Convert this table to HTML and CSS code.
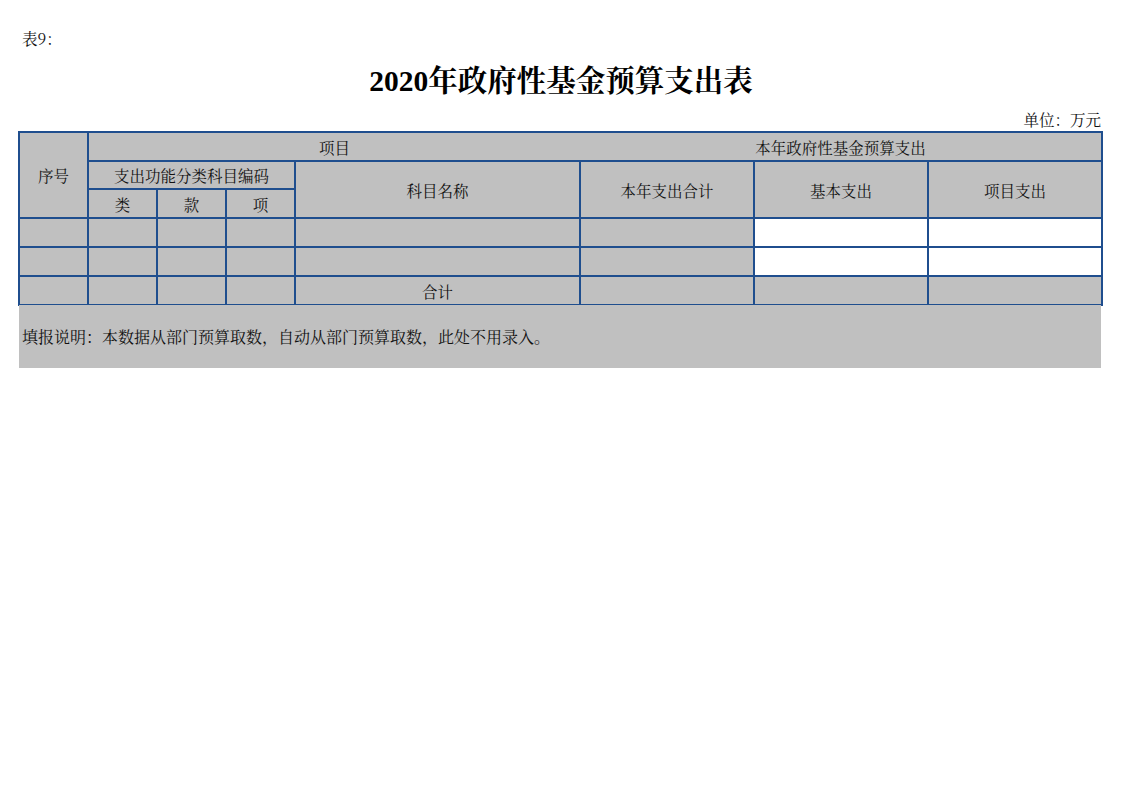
FILE: index.html
```html
<!DOCTYPE html>
<html lang="zh-CN">
<head>
<meta charset="utf-8">
<title>2020年政府性基金预算支出表</title>
<link rel="stylesheet" href="styles.css">
</head>
<body>
<div class="page">
  <div class="table-no">表9<span class="fw">：</span></div>
  <h1 class="title">2020年政府性基金预算支出表</h1>
  <div class="unit">单位<span class="fw">：</span>万元</div>
  <table class="budget">
    <colgroup>
      <col class="c-narrow"><col class="c-narrow"><col class="c-narrow"><col class="c-narrow">
      <col class="c-name"><col class="c-mid"><col class="c-mid"><col class="c-mid">
    </colgroup>
    <tr class="r-head">
      <td rowspan="3">序号</td>
      <td colspan="4" class="no-right">项目</td>
      <td colspan="3" class="no-left">本年政府性基金预算支出</td>
    </tr>
    <tr class="r-head2">
      <td colspan="3">支出功能分类科目编码</td>
      <td rowspan="2">科目名称</td>
      <td rowspan="2">本年支出合计</td>
      <td rowspan="2">基本支出</td>
      <td rowspan="2">项目支出</td>
    </tr>
    <tr class="r-head3">
      <td>类</td><td>款</td><td>项</td>
    </tr>
    <tr class="r-data">
      <td></td><td></td><td></td><td></td><td></td><td></td><td class="blank"></td><td class="blank"></td>
    </tr>
    <tr class="r-data">
      <td></td><td></td><td></td><td></td><td></td><td></td><td class="blank"></td><td class="blank"></td>
    </tr>
    <tr class="r-data">
      <td></td><td></td><td></td><td></td><td>合计</td><td></td><td></td><td></td>
    </tr>
  </table>
  <div class="note">填报说明<span class="fw">：</span>本数据从部门预算取数<span class="fw">，</span>自动从部门预算取数<span class="fw">，</span>此处不用录入。</div>
</div>
</body>
</html>
```
FILE: styles.css
```css
html, body {
  margin: 0;
  padding: 0;
  background: #ffffff;
}

body {
  font-family: "Noto Serif CJK SC", "Liberation Serif", "Noto Sans CJK SC", serif;
  color: #111111;
  font-size: 15.5px;
}

.fw {
  display: inline-block;
  width: 1em;
  text-align: left;
}

.page {
  width: 1084px;
  padding: 28px 0 0 19px;
}

.table-no {
  padding-left: 3px;
  height: 20px;
  line-height: 20px;
}

.title {
  margin: 0;
  padding-top: 13px;
  height: 40px;
  line-height: 40px;
  text-align: center;
  font-family: "Liberation Serif", "Noto Serif CJK SC", "Noto Sans CJK SC", serif;
  font-size: 29.5px;
  font-weight: bold;
  color: #000000;
}

.unit {
  text-align: right;
  padding-right: 2px;
  height: 22px;
  line-height: 22px;
  margin-top: 7px;
}

.budget {
  border-collapse: collapse;
  table-layout: fixed;
  width: 1084px;
  margin-left: -1px;
  margin-top: 1px;
}

.c-narrow { width: 69px; }
.c-name { width: 285px; }
.c-mid { width: 174px; }

.budget td {
  border: 2px solid #1f4e8e;
  background: #c0c0c0;
  text-align: center;
  vertical-align: middle;
  padding: 0;
  white-space: nowrap;
  line-height: 18px;
}

.budget .no-right { border-right: hidden; }
.budget .no-left { border-left: hidden; }

.r-head { height: 29px; }
.r-head2 { height: 28px; }
.r-head3 { height: 29px; }
.r-data { height: 29px; }

.budget td.blank { background: #ffffff; }

.note {
  width: 1082px;
  height: 63px;
  background: #c0c0c0;
  line-height: 63px;
  padding-left: 3px;
  box-sizing: border-box;
  margin-top: -1px;
  font-size: 16px;
}
```
